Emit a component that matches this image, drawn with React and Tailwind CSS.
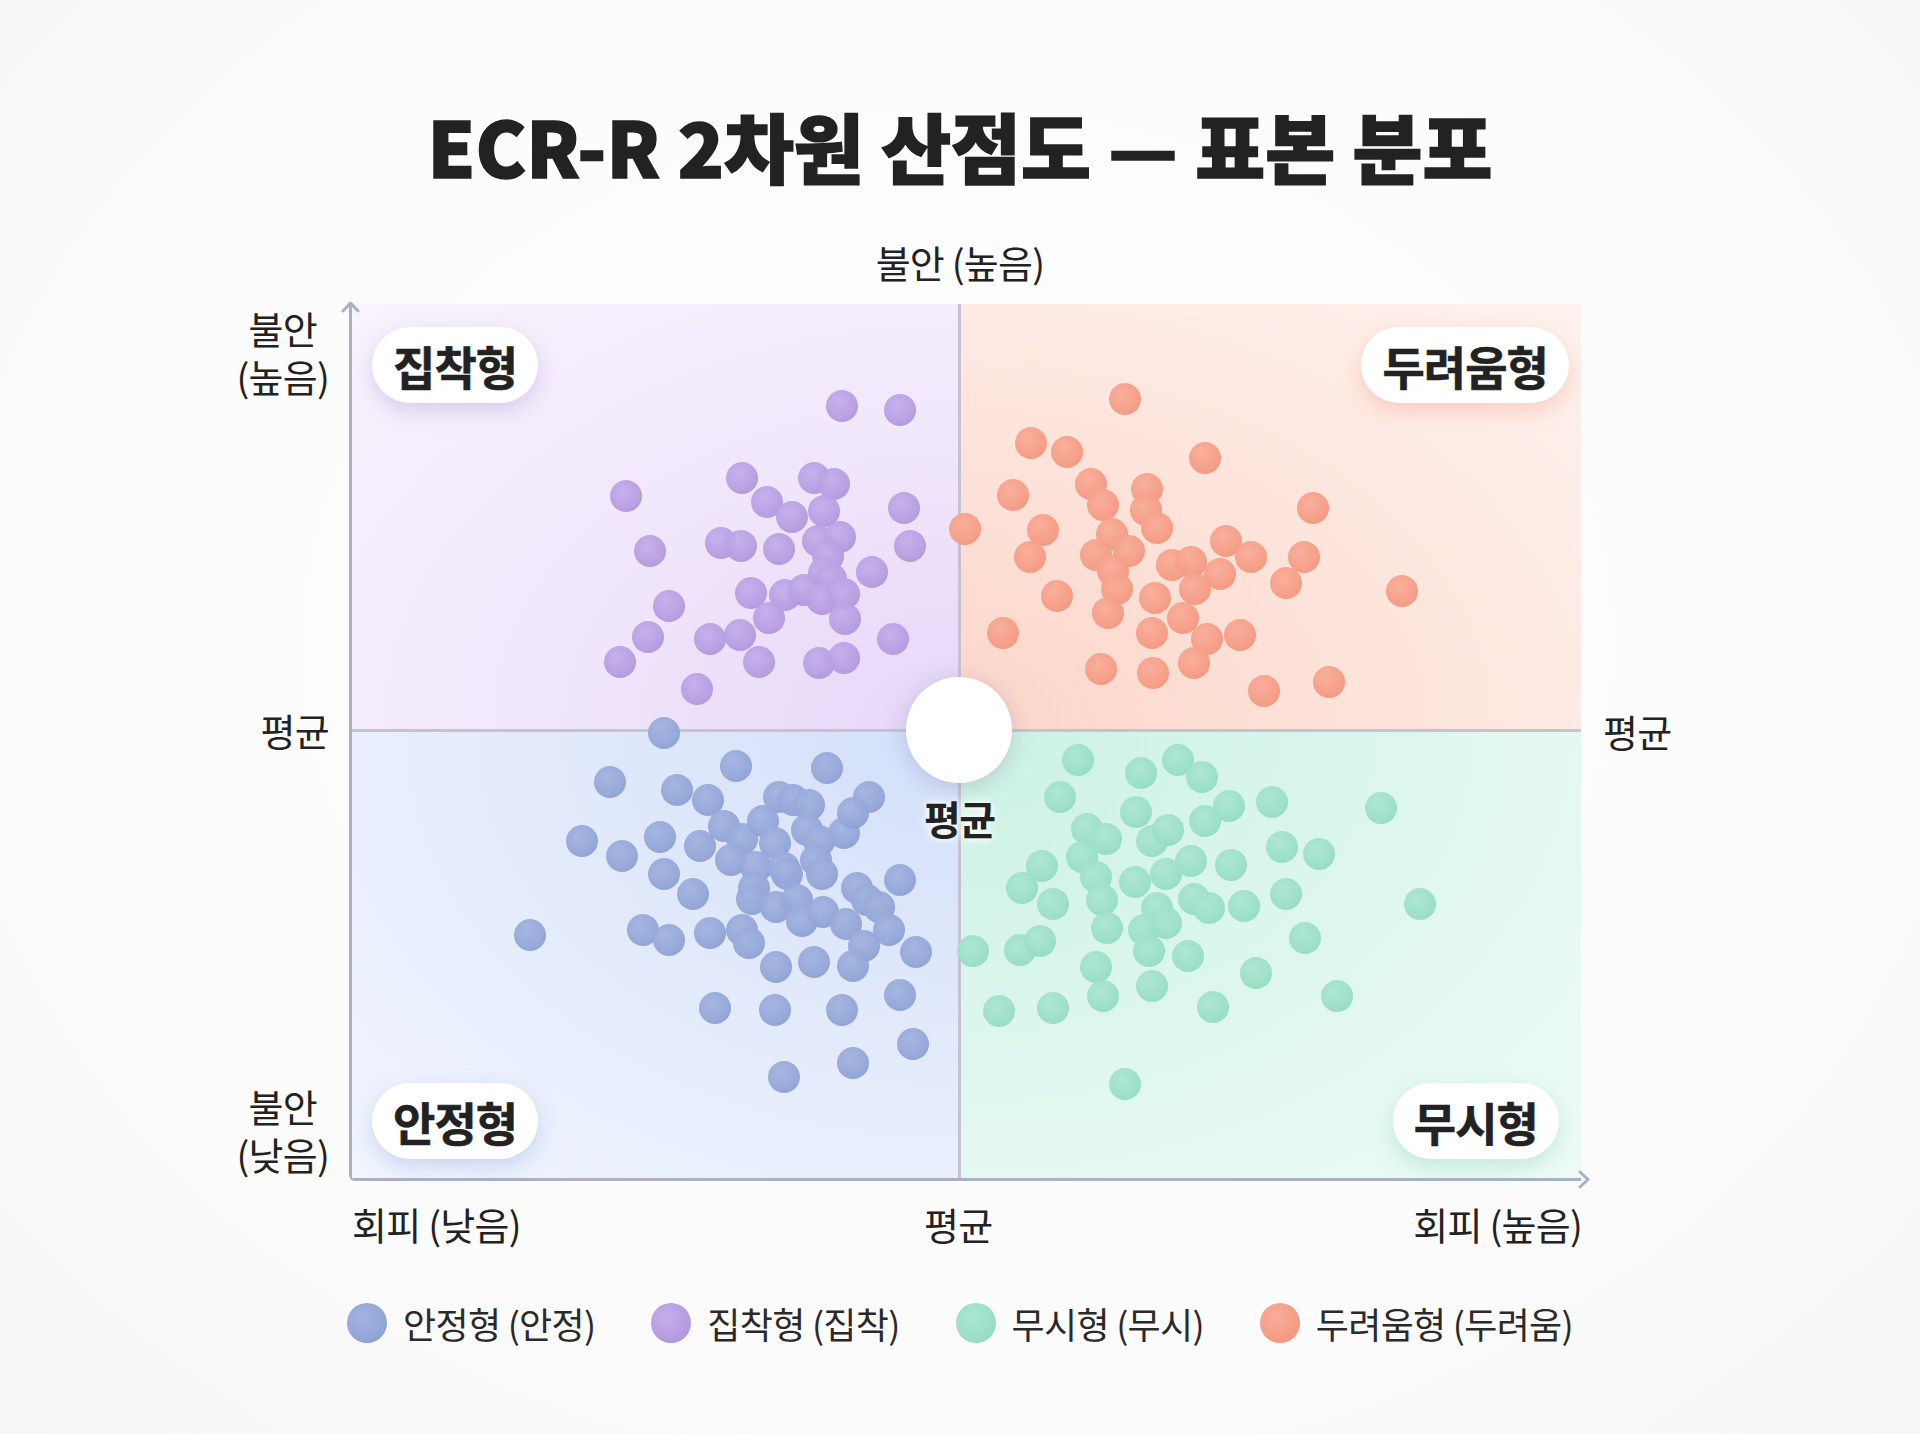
const SX = 1.2245;
const SY = 1.2194;

// dot centres read off the reference (shown at 1568 wide), scaled at runtime
const purple = [
  [688, 333], [735, 336], [511, 407], [606, 392], [665, 392], [681, 397], [626, 412], [647, 424],
  [673, 419], [738, 417], [531, 452], [589, 445], [605, 448], [636, 450], [668, 444], [686, 440],
  [676, 456], [743, 448], [673, 470], [679, 475], [712, 469], [546, 497], [613, 486], [641, 488],
  [657, 484], [671, 491], [689, 487], [628, 507], [690, 508], [529, 522], [580, 524], [604, 521],
  [729, 524], [506, 543], [620, 543], [669, 544], [689, 540], [569, 565],
];
const orange = [
  [919, 327], [842, 363], [871, 371], [984, 376], [827, 406], [891, 397], [937, 401], [901, 414],
  [936, 418], [1072, 417], [788, 434], [852, 435], [908, 438], [945, 433], [841, 457], [895, 455],
  [922, 452], [909, 468], [957, 463], [973, 461], [996, 471], [1001, 444], [1022, 457], [1065, 457],
  [863, 489], [912, 483], [943, 490], [976, 483], [1050, 478], [1145, 485], [905, 503], [966, 507],
  [819, 519], [941, 519], [986, 524], [1013, 521], [899, 549], [942, 552], [975, 544], [1032, 567],
  [1085, 559],
];
const blue = [
  [542, 601], [498, 641], [601, 628], [675, 630], [553, 648], [578, 656], [636, 654], [648, 656],
  [661, 660], [710, 654], [475, 690], [539, 686], [572, 694], [591, 677], [606, 688], [623, 673],
  [633, 691], [659, 681], [669, 690], [689, 683], [697, 667], [508, 702], [597, 705], [617, 711],
  [640, 712], [666, 705], [542, 717], [616, 728], [643, 717], [671, 717], [735, 722], [566, 733],
  [614, 737], [634, 744], [651, 738], [700, 728], [708, 738], [433, 767], [525, 763], [546, 771],
  [580, 765], [606, 763], [612, 773], [655, 755], [672, 748], [691, 758], [718, 744], [726, 763],
  [748, 781], [706, 776], [634, 793], [665, 789], [697, 792], [735, 816], [584, 827], [633, 828],
  [688, 828], [746, 856], [640, 883], [697, 872],
];
const green = [
  [880, 623], [932, 634], [962, 623], [982, 637], [866, 654], [928, 666], [984, 673], [1004, 661],
  [1039, 658], [1128, 663], [888, 680], [903, 688], [941, 690], [954, 681], [884, 703], [1047, 695],
  [1077, 700], [851, 710], [895, 719], [927, 723], [952, 717], [973, 706], [1005, 709], [835, 728],
  [860, 741], [900, 738], [945, 745], [975, 737], [987, 745], [1016, 743], [1050, 733], [1160, 741],
  [904, 761], [934, 763], [952, 757], [795, 780], [833, 779], [849, 772], [938, 780], [970, 784],
  [1066, 769], [895, 793], [1026, 798], [901, 817], [941, 809], [816, 829], [860, 827], [991, 826],
  [1092, 817], [919, 889],
];

const dotStyles = {
  purple: "bg-[radial-gradient(circle_at_40%_35%,#c4aeeb_0%,#b69de2_60%,#a98cd8_100%)]",
  orange: "bg-[radial-gradient(circle_at_40%_35%,#f9ad99_0%,#f59c85_60%,#ef8c74_100%)]",
  blue: "bg-[radial-gradient(circle_at_40%_35%,#a4b4e0_0%,#93a6d8_60%,#8597cd_100%)]",
  green: "bg-[radial-gradient(circle_at_40%_35%,#ace6d1_0%,#9adfc6_60%,#89d5b9_100%)]",
};

function Dots({ points, tone }) {
  return points.map(([x, y], i) => (
    <span
      key={tone + i}
      className={`absolute w-8 h-8 rounded-full opacity-95 ${dotStyles[tone]}`}
      style={{ left: x * SX - 352 - 16, top: y * SY - 304 - 16 }}
    />
  ));
}

function Pill({ children, shadow }) {
  return (
    <div
      className={`h-[76px] px-[21px] rounded-full bg-white flex items-center text-[46px] font-bold tracking-[-0.02em] text-[#222] [-webkit-text-stroke:0.6px_#222] ${shadow}`}
    >
      {children}
    </div>
  );
}

function LegendItem({ tone, label }) {
  return (
    <div className="flex items-center gap-4">
      <span className={`w-10 h-10 rounded-full ${dotStyles[tone]}`} />
      <span className="text-[36px] tracking-[-0.02em] leading-[48px] text-[#2a2a2a]">{label}</span>
    </div>
  );
}

export default function App() {
  return (
    <div className="min-h-[1434px] w-full bg-[radial-gradient(ellipse_at_50%_45%,#ffffff_0%,#fbfbfb_70%,#f6f6f6_100%)] font-['Noto_Sans_CJK_KR',sans-serif] text-[#222] flex flex-col items-center">
      <h1 className="pt-[107px] text-[76px] leading-none font-black text-[#222] [-webkit-text-stroke:1.5px_#222]">
        ECR-R 2차원 산점도 — 표본 분포
      </h1>

      <div className="mt-[55px] text-[38px] leading-[48px] tracking-[-0.02em]">불안 (높음)</div>

      <div className="mt-[18px] w-full flex">
        {/* left axis labels */}
        <div className="w-[349px] h-[877px] flex flex-col items-end pr-[20px] text-[38px] leading-[48px] tracking-[-0.02em]">
          <div className="text-center">
            <div>불안</div>
            <div>(높음)</div>
          </div>
          <div className="mt-[306px]">평균</div>
          <div className="mt-auto mb-[3px] text-center">
            <div>불안</div>
            <div>(낮음)</div>
          </div>
        </div>

        {/* plot */}
        <div className="relative w-[1232px] h-[877px] border-l-[3px] border-b-[3px] border-[#aab0c6] rounded-bl-[6px]">
          <div className="grid grid-cols-[606px_620px] grid-rows-[425px_446px] gap-[3px] bg-[#c6c2d2] w-[1229px] h-[874px]">
            <div className="bg-[radial-gradient(ellipse_at_100%_100%,#e6d6f8_0%,#f0e6fb_45%,#f8f3fd_100%)] flex items-start justify-start pt-[23px] pl-[20px]">
              <Pill shadow="shadow-[0_8px_20px_rgba(170,140,215,0.35)]">집착형</Pill>
            </div>
            <div className="bg-[radial-gradient(ellipse_at_0%_100%,#fcd5c8_0%,#fde3da_45%,#fef2ee_100%)] flex items-start justify-end pt-[23px] pr-[12px]">
              <Pill shadow="shadow-[0_8px_20px_rgba(240,150,125,0.35)]">두려움형</Pill>
            </div>
            <div className="bg-[radial-gradient(ellipse_at_100%_0%,#d3dffa_0%,#e1e9fb_45%,#f1f5fd_100%)] flex items-end justify-start pb-[19px] pl-[20px]">
              <Pill shadow="shadow-[0_8px_20px_rgba(140,160,220,0.35)]">안정형</Pill>
            </div>
            <div className="bg-[radial-gradient(ellipse_at_0%_0%,#cbf2e3_0%,#dbf6ec_45%,#eefbf6_100%)] flex items-end justify-end pb-[19px] pr-[22px]">
              <Pill shadow="shadow-[0_8px_20px_rgba(120,205,170,0.35)]">무시형</Pill>
            </div>
          </div>

          <Dots points={purple} tone="purple" />
          <Dots points={orange} tone="orange" />
          <Dots points={blue} tone="blue" />
          <Dots points={green} tone="green" />

          {/* centre marker */}
          <div className="absolute left-[554px] top-[373px] w-[106px] h-[106px] rounded-full bg-white shadow-[0_4px_22px_rgba(110,110,160,0.28)]" />
          <div className="absolute left-[572px] top-[494px] text-[40px] font-bold leading-none tracking-[-0.04em] text-[#222] [text-shadow:0_0_10px_#fff,0_0_6px_#fff]">
            평균
          </div>

          {/* arrow heads */}
          <svg className="absolute -left-[11px] -top-[3px]" width="19" height="12" viewBox="0 0 19 12">
            <path d="M2 10 L9.5 2 L17 10" fill="none" stroke="#aab0c6" strokeWidth="3" strokeLinecap="round" strokeLinejoin="round" />
          </svg>
          <svg className="absolute -right-[9px] -bottom-[11px]" width="12" height="19" viewBox="0 0 12 19">
            <path d="M2 2 L10 9.5 L2 17" fill="none" stroke="#aab0c6" strokeWidth="3" strokeLinecap="round" strokeLinejoin="round" />
          </svg>
        </div>

        {/* right axis label */}
        <div className="flex-1 pl-[22px] text-[38px] leading-[48px] tracking-[-0.02em]">
          <div className="mt-[403px]">평균</div>
        </div>
      </div>

      {/* bottom axis labels */}
      <div className="mt-[19px] w-full flex text-[38px] leading-[48px] tracking-[-0.02em]">
        <div className="w-[352px]" />
        <div className="grid grid-cols-[607px_623px]">
          <div>회피 (낮음)</div>
          <div className="flex justify-between">
            <span className="-ml-[35px]">평균</span>
            <span>회피 (높음)</span>
          </div>
        </div>
      </div>

      {/* legend */}
      <div className="mt-[51px] flex items-center gap-[56px]">
        <LegendItem tone="blue" label="안정형 (안정)" />
        <LegendItem tone="purple" label="집착형 (집착)" />
        <LegendItem tone="green" label="무시형 (무시)" />
        <LegendItem tone="orange" label="두려움형 (두려움)" />
      </div>
    </div>
  );
}
